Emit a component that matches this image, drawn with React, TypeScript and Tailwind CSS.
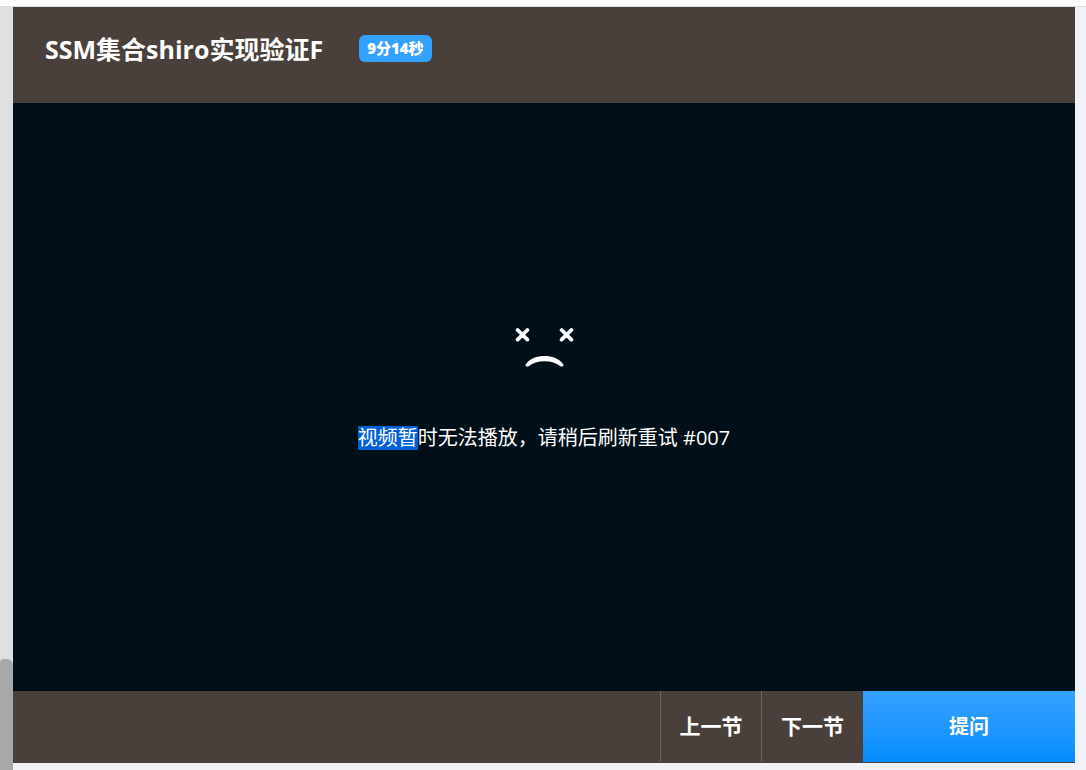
import React from "react";

const BODY_FONT = "font-['Open_Sans','Noto_Sans_CJK_SC',sans-serif]";

function SadFace() {
  return (
    <svg
      viewBox="-1 0 60 42"
      className="h-[42px] w-[60px]"
      fill="none"
      stroke="#fff"
      strokeLinecap="round"
      aria-hidden="true"
    >
      <path d="M2.600 3 12.400 12.600M12.400 3 2.600 12.600M46.600 3 56.400 12.600M56.400 3 46.600 12.600" strokeWidth="3.8" />
      <path
        d="M10.800 37.200C15.500 31 22 29 29.500 29S43.500 31 48.200 37.200C49 38.800 47.400 40.200 45.400 39.200C41 35.800 36 34.200 29.500 34.200S18 35.800 13.600 39.200C11.600 40.200 10 38.800 10.800 37.200Z"
        fill="#fff"
        stroke="none"
      />
    </svg>
  );
}

function LessonHeader() {
  return (
    <header className="flex h-24 shrink-0 items-start gap-9 bg-[#4a403b] pt-6 pl-8 text-white">
      <h1 className="text-[25px] leading-9 font-bold whitespace-nowrap">SSM集合shiro实现验证F</h1>
      <span className="mt-1 h-[27px] rounded-md bg-[#33a1ff] px-2 text-[15px] leading-[27px] font-extrabold whitespace-nowrap">
        9分14秒
      </span>
    </header>
  );
}

function VideoError() {
  return (
    <section className="flex flex-1 flex-col items-center justify-center gap-[57px] bg-[#000f18] pb-[17px] text-white">
      <SadFace />
      <p className="text-xl leading-6 whitespace-nowrap">
        <span className="inline-block h-6 bg-[#0060d5]">视频暂</span>时无法播放，请稍后刷新重试 #007
      </p>
    </section>
  );
}

function LessonControls() {
  return (
    <footer className="flex h-[72px] shrink-0 justify-end bg-[#4a403b] pb-px text-[21px] font-bold text-white">
      <button type="button" className="w-[101px] border-l border-[#6b6563]">
        上一节
      </button>
      <button type="button" className="w-[102px] border-l border-[#6b6563]">
        下一节
      </button>
      <button type="button" className="w-[212px] bg-linear-to-b from-[#33a1ff] to-[#008cff] text-xl">
        提问
      </button>
    </footer>
  );
}

export default function App() {
  return (
    <div className={`flex min-h-screen flex-col border-t-[6px] border-white bg-[#f1f2f7] ${BODY_FONT}`}>
      <div className="h-px shrink-0 bg-[#dcdcdc]" />
      <div className="flex flex-1">
        <div className="flex w-[13px] shrink-0 flex-col justify-end bg-[#e0e0e0]">
          <div className="h-[111px] rounded-tr-md rounded-tl-sm bg-[#a8a8a8]" />
        </div>
        <main className="mr-[11px] mb-[7px] flex min-w-0 flex-1 flex-col">
          <LessonHeader />
          <VideoError />
          <LessonControls />
        </main>
      </div>
    </div>
  );
}
